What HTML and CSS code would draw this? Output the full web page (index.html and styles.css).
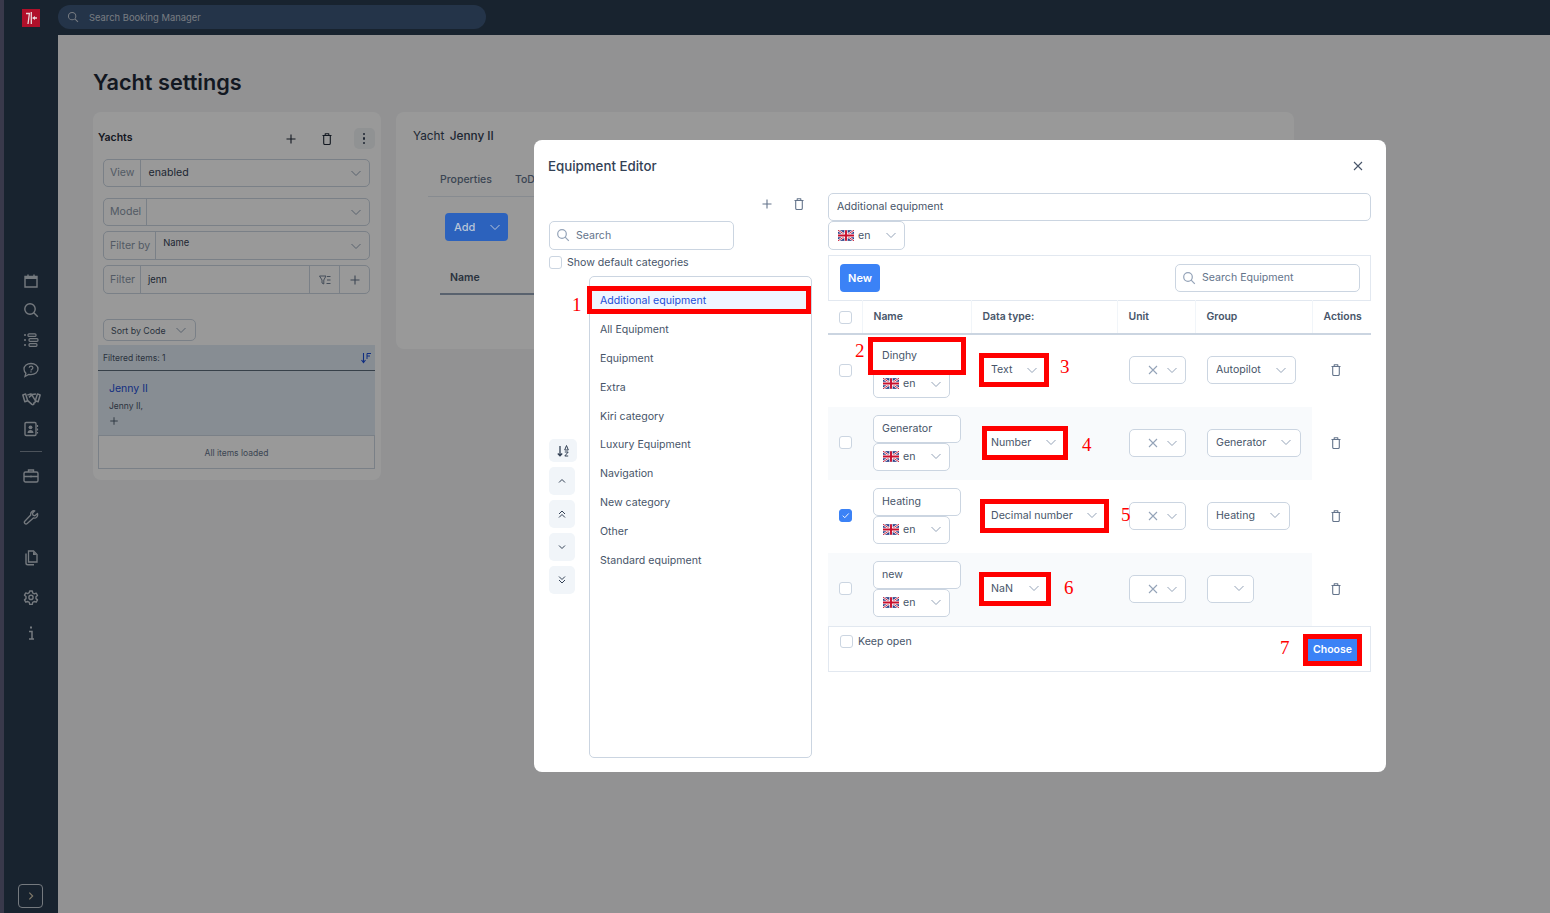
FILE: index.html
```html
<!DOCTYPE html>
<html lang="en">
<head>
  <meta charset="UTF-8" />
  <meta name="viewport" content="width=device-width, initial-scale=1.0"/>
  <title>Yacht settings - Equipment Editor</title>
  <link rel="stylesheet" href="styles.css">
</head>

<body>
  <!-- Icons used more than once -->
  <svg class="sprite" xmlns="http://www.w3.org/2000/svg">
    <symbol id="i-chev" viewBox="0 0 12 12"><path d="M1.5 4l4.5 4.5L10.5 4" fill="none" stroke="currentColor" stroke-width="1"/></symbol>
    <symbol id="i-x" viewBox="0 0 12 12"><path d="M2 2l8 8M10 2l-8 8" fill="none" stroke="currentColor" stroke-width="1.1"/></symbol>
    <symbol id="i-plus" viewBox="0 0 12 12"><path d="M6 1.5v9M1.5 6h9" fill="none" stroke="currentColor" stroke-width="1.1"/></symbol>
    <symbol id="i-trash" viewBox="0 0 12 12"><path d="M1.5 2.5h9M4.2 2.3V.8h3.600v1.500M2.700 2.500v7.700c0 .8.400 1.300 1.200 1.300h4.200c.8 0 1.200-.5 1.200-1.300V2.500" fill="none" stroke="currentColor" stroke-width="1.100" stroke-linejoin="round"/></symbol>
    <symbol id="i-search" viewBox="0 0 14 14"><circle cx="6" cy="6" r="4.3" fill="none" stroke="currentColor" stroke-width="1.2"/><path d="M9.2 9.2l3.6 3.6" fill="none" stroke="currentColor" stroke-width="1.2"/></symbol>
    <symbol id="i-flag" viewBox="0 0 15 10">
      <rect width="15" height="10" fill="#2b3f87"/>
      <path d="M0 0l15 10M15 0L0 10" stroke="#fff" stroke-width="2"/>
      <path d="M0 0l15 10M15 0L0 10" stroke="#c8102e" stroke-width=".8"/>
      <path d="M7.5 0v10M0 5h15" stroke="#fff" stroke-width="3.2"/>
      <path d="M7.5 0v10M0 5h15" stroke="#c8102e" stroke-width="1.8"/>
    </symbol>
  </svg>

  <div class="strip"></div>

  <!-- Sidebar -->
  <div class="sidebar">
    <div class="logo">
      <svg viewBox="0 0 18 18"><path d="M4 4.5h3.400L6 15M9.300 3v12" fill="none" stroke="#e8d8dc" stroke-width="1.300"/><path d="M10 9l3-2v1.200h2v1.600h-2V11z" fill="#e8d8dc"/></svg>
    </div>
    <div class="nav">
      <a class="nav-item"><svg viewBox="0 0 16 16"><path d="M2 3.500h12V14H2zM5 1.500v2M11 1.500v2" fill="none" stroke="currentColor" stroke-width="1.400"/><rect x="2" y="3" width="12" height="3" fill="currentColor"/></svg></a>
      <a class="nav-item"><svg viewBox="0 0 16 16"><circle cx="7" cy="7" r="5.200" fill="none" stroke="currentColor" stroke-width="1.400"/><path d="M10.800 10.800l4 4" stroke="currentColor" stroke-width="1.400"/></svg></a>
      <a class="nav-item"><svg viewBox="0 0 16 16"><path d="M1 3h2M1 8h2M1 13h2" stroke="currentColor" stroke-width="1.400"/><rect x="5" y="1.800" width="8" height="2.600" rx="1" fill="none" stroke="currentColor" stroke-width="1.200"/><rect x="6" y="6.700" width="9" height="2.600" rx="1" fill="none" stroke="currentColor" stroke-width="1.200"/><rect x="6" y="11.700" width="8" height="2.600" rx="1" fill="none" stroke="currentColor" stroke-width="1.200"/></svg></a>
      <a class="nav-item"><svg viewBox="0 0 16 16"><path d="M8 1.500c3.900 0 7 2.400 7 5.600s-3.100 5.600-7 5.600c-.8 0-1.600-.1-2.300-.3L2 14.500l.9-3.200C1.700 10.200 1 8.700 1 7.100 1 3.900 4.100 1.500 8 1.500z" fill="none" stroke="currentColor" stroke-width="1.300"/><path d="M6.200 5.800c0-2.200 3.700-2.200 3.700 0 0 1.400-1.900 1.300-1.900 2.600M8 9.300v1.100" fill="none" stroke="currentColor" stroke-width="1.200"/></svg></a>
      <a class="nav-item nav-hands"><svg viewBox="0 0 18 14"><path d="M.8 3.200l2.600-1 2 6.500-2.700.9zM17.200 3.200l-2.600-1-2 6.500 2.700.9zM5 3.300l3.200-1.100 1.600.6 3.400-.5M5.400 8.500l4 3.600c1.100.8 2.300-.2 1.700-1.200l1.300-.6.300-1.600M6.600 5.500l2.700-2.400 3.400 5.500" fill="none" stroke="currentColor" stroke-width="1.400" stroke-linejoin="round"/></svg></a>
      <a class="nav-item"><svg viewBox="0 0 16 16"><rect x="2" y="1.500" width="11" height="13" rx="1.200" fill="none" stroke="currentColor" stroke-width="1.400"/><circle cx="7.500" cy="6.300" r="1.900" fill="currentColor"/><path d="M4.500 12c0-4 6-4 6 0z" fill="currentColor"/><path d="M14.500 4v2M14.500 7.500v2M14.500 11v1.500" stroke="currentColor" stroke-width="1.200"/></svg></a>
      <div class="nav-line"></div>
      <a class="nav-item nav-work"><svg viewBox="0 0 16 16"><rect x="1" y="4" width="14" height="10" rx="1.500" fill="none" stroke="currentColor" stroke-width="1.400"/><path d="M5.500 4V2h5v2M1 8.500h14M8 7.500v2" fill="none" stroke="currentColor" stroke-width="1.400"/></svg></a>
      <a class="nav-item nav-wide"><svg viewBox="0 0 16 16"><path d="M14.500 3.500l-2.600 2.300-2-.6-.5-2 2.400-2.300C9.500.3 7.200 2.200 7.700 5L1.800 11.200c-1.400 1.600.8 3.800 2.400 2.400L10.400 8c2.700.7 4.800-1.700 4.100-4.500z" fill="none" stroke="currentColor" stroke-width="1.300" stroke-linejoin="round"/></svg></a>
      <a class="nav-item nav-wide"><svg viewBox="0 0 16 16"><path d="M5.500 1h5l3.500 3.500V12H5.500z" fill="none" stroke="currentColor" stroke-width="1.300"/><path d="M10 1.500l3.500 3.500H10z" fill="currentColor"/><path d="M3 3.500V13c0 1 .7 1.800 1.800 1.800h6.200" fill="none" stroke="currentColor" stroke-width="1.400"/></svg></a>
      <a class="nav-item nav-wide"><svg viewBox="0 0 16 16"><path d="M6.700 1h2.600l.4 2 1.600.9 1.900-.7 1.300 2.300-1.500 1.300v1.800l1.500 1.300-1.300 2.300-1.900-.7-1.600.9-.4 2H6.700l-.4-2-1.600-.9-1.900.7-1.300-2.300 1.500-1.300V6.500L1.500 5.200l1.300-2.300 1.900.7 1.600-.9z" fill="none" stroke="currentColor" stroke-width="1.400" stroke-linejoin="round"/><circle cx="8" cy="7.400" r="2.100" fill="none" stroke="currentColor" stroke-width="1.400"/></svg></a>
      <a class="nav-item nav-info"><svg viewBox="0 0 16 16"><path d="M6 6.500h3V14M6 14h5" fill="none" stroke="currentColor" stroke-width="1.500"/><rect x="7" y="1.500" width="2" height="2" fill="currentColor"/></svg></a>
    </div>
    <button class="expand"><svg viewBox="0 0 12 12"><path d="M4 2l4 4-4 4" fill="none" stroke="currentColor" stroke-width="1.400"/></svg></button>
  </div>

  <div class="main">
    <div class="topbar">
      <div class="global-search">
        <svg class="ico12"><use href="#i-search"/></svg>
        <span>Search Booking Manager</span>
      </div>
    </div>

    <div class="page">
      <h1>Yacht settings</h1>
      <div class="panels">

        <!-- Yachts list -->
        <div class="panel panel-yachts">
          <div class="panel-head">
            <b>Yachts</b>
            <svg class="ico12 head-plus"><use href="#i-plus"/></svg>
            <svg class="ico12 head-trash"><use href="#i-trash"/></svg>
            <span class="kebab"><i></i><i></i><i></i></span>
          </div>
          <div class="group group-view"><span class="addon">View</span><span class="group-value">enabled</span><svg class="ico12"><use href="#i-chev"/></svg></div>
          <div class="group group-model"><span class="addon">Model</span><span class="group-value"></span><svg class="ico12"><use href="#i-chev"/></svg></div>
          <div class="group group-by"><span class="addon">Filter by</span><span class="group-value small up">Name</span><svg class="ico12"><use href="#i-chev"/></svg></div>
          <div class="group group-filter">
            <span class="addon">Filter</span><span class="group-value small">jenn</span>
            <span class="cell"><svg class="ico12" viewBox="0 0 12 12"><path d="M.5 2h6.500L4.800 6v4L3 9V6zM8 2.500h3.500M8 6h3.500M7.500 9.500h4" fill="none" stroke="currentColor" stroke-width=".9"/></svg></span>
            <span class="cell"><svg class="ico12"><use href="#i-plus"/></svg></span>
          </div>
          <div class="sort">Sort by Code<svg class="ico12"><use href="#i-chev"/></svg></div>
          <div class="filtered">
            <span>Filtered items: 1</span>
            <svg class="ico12" viewBox="0 0 12 12"><path d="M3.500 1v9M1.500 8l2 2.500 2-2.500" fill="none" stroke="currentColor" stroke-width="1.100"/><path d="M7 1.500h4M7 4h3M7 1.500v5.500" fill="none" stroke="currentColor" stroke-width="1"/></svg>
          </div>
          <div class="yacht-item">
            <div class="yacht-name">Jenny II</div>
            <div class="yacht-sub">Jenny II,</div>
            <svg class="ico10" viewBox="0 0 12 12"><use href="#i-plus"/></svg>
          </div>
          <div class="loaded">All items loaded</div>
        </div>

        <!-- Yacht detail -->
        <div class="panel panel-detail">
          <div class="detail-title">Yacht <b>Jenny II</b></div>
          <div class="tabs"><span>Properties</span><span>ToDo</span></div>
          <button class="add-btn">Add<svg class="ico12"><use href="#i-chev"/></svg></button>
          <div class="detail-col">Name</div>
        </div>
      </div>
    </div>
  </div>

  <!-- Modal -->
  <div class="overlay">
    <div class="modal">
      <div class="modal-head">
        <h3>Equipment Editor</h3>
        <svg class="ico12 modal-close"><use href="#i-x"/></svg>
      </div>

      <div class="modal-body">
        <!-- Categories -->
        <div class="cats">
          <div class="cats-tools">
            <svg class="ico12"><use href="#i-plus"/></svg>
            <svg class="ico12"><use href="#i-trash"/></svg>
          </div>
          <div class="field field-search cats-search">
            <svg class="ico14"><use href="#i-search"/></svg><span>Search</span>
          </div>
          <label class="check-row"><span class="check"></span>Show default categories</label>
          <div class="cats-row">
            <div class="move">
              <button class="move-btn move-sort"><svg class="ico14" viewBox="0 0 14 14"><path d="M4 2v9.500M1.800 9.500L4 11.800l2.200-2.300" fill="none" stroke="currentColor" stroke-width="1.300"/><path d="M8.700 6l1.800-4.500L12.300 6zM8.800 8h3.400L8.800 12h3.400" fill="none" stroke="currentColor" stroke-width="1"/></svg></button>
              <button class="move-btn"><svg class="ico10" viewBox="0 0 10 10"><path d="M2 6.500l3-3 3 3" fill="none" stroke="currentColor" stroke-width="1"/></svg></button>
              <button class="move-btn"><svg class="ico10" viewBox="0 0 10 10"><path d="M2 5l3-3 3 3M2 8.500l3-3 3 3" fill="none" stroke="currentColor" stroke-width="1"/></svg></button>
              <button class="move-btn"><svg class="ico10" viewBox="0 0 10 10"><path d="M2 3.500l3 3 3-3" fill="none" stroke="currentColor" stroke-width="1"/></svg></button>
              <button class="move-btn"><svg class="ico10" viewBox="0 0 10 10"><path d="M2 1.500l3 3 3-3M2 5l3 3 3-3" fill="none" stroke="currentColor" stroke-width="1"/></svg></button>
            </div>
            <ul class="cat-list">
              <li class="active">Additional equipment</li>
              <li>All Equipment</li>
              <li>Equipment</li>
              <li>Extra</li>
              <li>Kiri category</li>
              <li>Luxury Equipment</li>
              <li>Navigation</li>
              <li>New category</li>
              <li>Other</li>
              <li>Standard equipment</li>
            </ul>
          </div>
        </div>

        <!-- Equipment -->
        <div class="equip">
          <div class="field">Additional equipment</div>
          <div class="select lang lang-top"><svg class="flag"><use href="#i-flag"/></svg>en<svg class="ico12 chev"><use href="#i-chev"/></svg></div>
          <div class="toolbar">
            <button class="btn-new">New</button>
            <div class="field field-search equip-search"><svg class="ico14"><use href="#i-search"/></svg><span>Search Equipment</span></div>
          </div>
          <table class="equip-table">
            <colgroup><col class="c-check"><col class="c-name"><col class="c-type"><col class="c-unit"><col class="c-group"><col class="c-act"></colgroup>
            <thead>
              <tr><th><span class="check"></span></th><th>Name</th><th>Data type:</th><th>Unit</th><th>Group</th><th>Actions</th></tr>
            </thead>
            <tbody>
              <tr>
                <td><span class="check"></span></td>
                <td>
                  <div class="field name-input marked">Dinghy</div>
                  <div class="select lang"><svg class="flag"><use href="#i-flag"/></svg>en<svg class="ico12 chev"><use href="#i-chev"/></svg></div>
                </td>
                <td><div class="select type-select marked type-text">Text<svg class="ico12 chev"><use href="#i-chev"/></svg></div></td>
                <td><div class="select unit-select"><svg class="ico12"><use href="#i-x"/></svg><svg class="ico12"><use href="#i-chev"/></svg></div></td>
                <td><div class="select group-select">Autopilot<svg class="ico12 chev"><use href="#i-chev"/></svg></div></td>
                <td class="act"><svg class="ico12"><use href="#i-trash"/></svg></td>
              </tr>
              <tr>
                <td><span class="check"></span></td>
                <td>
                  <div class="field name-input">Generator</div>
                  <div class="select lang"><svg class="flag"><use href="#i-flag"/></svg>en<svg class="ico12 chev"><use href="#i-chev"/></svg></div>
                </td>
                <td><div class="select type-select marked type-number">Number<svg class="ico12 chev"><use href="#i-chev"/></svg></div></td>
                <td><div class="select unit-select"><svg class="ico12"><use href="#i-x"/></svg><svg class="ico12"><use href="#i-chev"/></svg></div></td>
                <td><div class="select group-select">Generator<svg class="ico12 chev"><use href="#i-chev"/></svg></div></td>
                <td class="act"><svg class="ico12"><use href="#i-trash"/></svg></td>
              </tr>
              <tr>
                <td><span class="check checked"><svg viewBox="0 0 12 12"><path d="M3 6.200l2.200 2.200L9.500 3.800" fill="none" stroke="#fff" stroke-width="1"/></svg></span></td>
                <td>
                  <div class="field name-input">Heating</div>
                  <div class="select lang"><svg class="flag"><use href="#i-flag"/></svg>en<svg class="ico12 chev"><use href="#i-chev"/></svg></div>
                </td>
                <td><div class="select type-select marked type-decimal">Decimal number<svg class="ico12 chev"><use href="#i-chev"/></svg></div></td>
                <td><div class="select unit-select"><svg class="ico12"><use href="#i-x"/></svg><svg class="ico12"><use href="#i-chev"/></svg></div></td>
                <td><div class="select group-select">Heating<svg class="ico12 chev"><use href="#i-chev"/></svg></div></td>
                <td class="act"><svg class="ico12"><use href="#i-trash"/></svg></td>
              </tr>
              <tr>
                <td><span class="check"></span></td>
                <td>
                  <div class="field name-input">new</div>
                  <div class="select lang"><svg class="flag"><use href="#i-flag"/></svg>en<svg class="ico12 chev"><use href="#i-chev"/></svg></div>
                </td>
                <td><div class="select type-select marked type-nan">NaN<svg class="ico12 chev"><use href="#i-chev"/></svg></div></td>
                <td><div class="select unit-select"><svg class="ico12"><use href="#i-x"/></svg><svg class="ico12"><use href="#i-chev"/></svg></div></td>
                <td><div class="select group-select group-empty"><svg class="ico12 chev"><use href="#i-chev"/></svg></div></td>
                <td class="act"><svg class="ico12"><use href="#i-trash"/></svg></td>
              </tr>
            </tbody>
          </table>
          <div class="equip-foot">
            <label class="check-row"><span class="check"></span>Keep open</label>
            <button class="btn-choose marked">Choose</button>
          </div>
        </div>
      </div>

      <!-- Red numbers drawn over the screenshot -->
      <span class="note note-1">1</span>
      <span class="note note-2">2</span>
      <span class="note note-3">3</span>
      <span class="note note-4">4</span>
      <span class="note note-5">5</span>
      <span class="note note-6">6</span>
      <span class="note note-7">7</span>
    </div>
  </div>
</body>
</html>
```

FILE: styles.css
```css
* {
  box-sizing: border-box;
}

body {
  font-family: Inter, "Noto Sans", sans-serif;
  font-size: 10.6px;
  margin: 0;
  display: flex;
  height: 100vh;
  overflow: hidden;
  background-color: #f3f4f6;
  color: #475569;
}

button {
  font-family: inherit;
  border: none;
  padding: 0;
}

.sprite {
  display: none;
}

.ico10 {
  display: block;
  width: 10px;
  height: 10px;
}

.ico12 {
  width: 12px;
  height: 12px;
  flex: none;
}

.ico14 {
  width: 14px;
  height: 14px;
  flex: none;
}

.strip {
  width: 4px;
  background-color: #5f5f7e;
}

/* Sidebar */
.sidebar {
  width: 54px;
  background-color: #283b4f;
  color: #c4cbd4;
  display: flex;
  flex-direction: column;
  align-items: center;
  padding: 9px 0 5px;
}

/* logo keeps its full colour above the dim layer */
.logo {
  position: relative;
  z-index: 1;
  width: 18px;
  height: 18px;
  background-color: #b0102a;
}

.logo svg {
  display: block;
}

.nav {
  margin-top: 239px;
  display: flex;
  flex-direction: column;
  align-items: center;
}

.nav-item {
  height: 29.6px;
  display: flex;
  align-items: center;
  justify-content: center;
}

.nav-item svg {
  width: 16px;
  height: 16px;
}

.nav-hands svg {
  width: 19px;
}

.nav-line {
  width: 22px;
  height: 1px;
  background-color: #7f8b98;
  margin: 7px 0;
}

.nav-work {
  margin-top: 3px;
  margin-bottom: 7px;
}

.nav-wide {
  height: 40px;
}

.nav-info {
  height: 30px;
}

.expand {
  margin-top: auto;
  width: 25px;
  height: 24px;
  margin-left: -1px;
  background: none;
  border: 1px solid #c4cbd4;
  border-radius: 4px;
  color: #d8cbb0;
  display: flex;
  align-items: center;
  justify-content: center;
}

.expand svg {
  width: 10px;
  height: 10px;
}

/* Top bar */
.main {
  flex: 1;
  min-width: 0;
}

.topbar {
  height: 35px;
  background-color: #283b4f;
  padding-top: 5px;
}

.global-search {
  width: 428px;
  height: 24px;
  border-radius: 12px;
  background-color: #3d577a;
  color: #c6ced8;
  font-size: 9.4px;
  display: flex;
  align-items: center;
  gap: 10px;
  padding-left: 9px;
}

/* Page behind the modal */
.page {
  padding: 33px 0 0 35px;
}

h1 {
  margin: 0 0 16px;
  font-size: 21.7px;
  line-height: 28px;
  font-weight: 600;
  color: #1f2937;
}

.panels {
  display: flex;
  gap: 15px;
  align-items: flex-start;
}

.panel {
  background-color: #fff;
  border-radius: 8px;
}

.panel-yachts {
  width: 288px;
  height: 368px;
  padding: 16px 6px 0 5px;
}

.panel-detail {
  width: 898px;
  height: 237px;
  padding: 16px 17px;
}

.panel-head {
  height: 21px;
  display: flex;
  align-items: center;
  font-size: 10.5px;
  color: #1f2937;
}

.panel-head b {
  font-weight: 600;
  margin-top: -2px;
}

.head-plus {
  margin-left: 152px;
}

.head-trash {
  margin-left: 24px;
}

.kebab {
  margin-left: 21px;
  width: 21px;
  height: 21px;
  border-radius: 5px;
  background-color: #f1f3f5;
  display: flex;
  flex-direction: column;
  align-items: center;
  justify-content: center;
  gap: 2px;
}

.kebab i {
  width: 2.5px;
  height: 2.5px;
  border-radius: 50%;
  background-color: #334155;
}

.group {
  margin-left: 5px;
  width: 267px;
  height: 28px;
  border: 1px solid #cbd5e1;
  border-radius: 5px;
  display: flex;
  align-items: center;
  color: #94a3b8;
}

.group > svg {
  margin-right: 7px;
}

.group-view {
  margin-top: 10px;
}

.group-model {
  margin-top: 11px;
}

.group-by,
.group-filter {
  margin-top: 5px;
  height: 29px;
}

.addon {
  height: 100%;
  display: flex;
  align-items: center;
  padding: 0 5px 1px 6px;
  border-right: 1px solid #cbd5e1;
  color: #8a97a8;
}

.group-value {
  flex: 1;
  padding: 0 0 1px 8px;
  color: #334155;
}

.small {
  font-size: 9.4px;
  padding-left: 7px;
}

.up {
  margin-top: -5px;
}

.cell {
  width: 30px;
  height: 100%;
  border-left: 1px solid #cbd5e1;
  display: flex;
  align-items: center;
  justify-content: center;
  color: #64748b;
}

.sort {
  margin: 25px 0 0 5px;
  width: 93px;
  height: 22px;
  border: 1px solid #cbd5e1;
  border-radius: 5px;
  font-size: 8.8px;
  color: #475569;
  display: flex;
  align-items: center;
  justify-content: space-between;
  padding: 0 8px 0 7px;
}

.sort svg {
  color: #94a3b8;
}

.filtered {
  margin-top: 4px;
  height: 26px;
  background-color: #e2ecf5;
  border-bottom: 1px solid #5d6b7a;
  font-size: 8.5px;
  display: flex;
  align-items: center;
  justify-content: space-between;
  padding: 0 3px 0 5px;
}

.filtered svg {
  color: #1d4ed8;
}

.yacht-item {
  height: 65px;
  background-color: #e2ecf5;
  padding: 11px 11px 0;
  border-bottom: 1px solid #cbd5e1;
}

.yacht-name {
  color: #1d4ed8;
  font-size: 10.5px;
  line-height: 13px;
}

.yacht-sub {
  font-size: 8.5px;
  margin-top: 6px;
  line-height: 11px;
}

.yacht-item svg {
  margin-top: 4px;
}

.loaded {
  height: 33px;
  border: 1px solid #cbd5e1;
  border-top: none;
  font-size: 8.5px;
  color: #64748b;
  padding-top: 1px;
  display: flex;
  align-items: center;
  justify-content: center;
}

.detail-title {
  font-size: 11.8px;
  line-height: 16px;
  color: #334155;
}

.detail-title b {
  font-weight: 500;
  margin-left: 2px;
}

.tabs {
  margin: 26px 0 0 15px;
  height: 27px;
  display: flex;
  gap: 23px;
  font-size: 10.5px;
  font-weight: 500;
  color: #64748b;
  padding: 3px 0 0 12px;
  border-bottom: 1px solid #e2e8f0;
}

/* same as the logo, this blue is stronger than the dim layer allows */
.add-btn {
  position: relative;
  z-index: 1;
  margin: 16px 0 0 32px;
  width: 63px;
  height: 28px;
  background-color: #2c62bd;
  color: #b9c5d8;
  border-radius: 4px;
  font-size: 11px;
  font-weight: 500;
  display: flex;
  align-items: center;
  justify-content: space-between;
  padding: 0 7px 0 9px;
}

.detail-col {
  margin: 30px 0 0 27px;
  width: 95px;
  padding: 0 0 9px 10px;
  font-weight: 600;
  font-size: 10.5px;
  border-bottom: 2px solid #94a3b8;
}

/* Modal */
.overlay {
  position: fixed;
  inset: 0;
  background-color: rgba(0, 0, 0, 0.4);
  padding: 140px 0 0 534px;
}

.modal {
  position: relative;
  width: 852px;
  height: 632px;
  background-color: #fff;
  border-radius: 8px;
  padding: 0 15px;
}

.modal-head {
  height: 53px;
  display: flex;
  align-items: center;
  justify-content: space-between;
  padding: 0 7px 2px 0;
  margin-left: -1px;
}

.modal-head h3 {
  margin: 0;
  font-size: 13.3px;
  font-weight: 500;
  color: #334155;
}

.modal-close {
  color: #475569;
}

.modal-body {
  display: flex;
  gap: 16px;
}

.cats {
  width: 263px;
}

.cats-tools {
  height: 28px;
  display: flex;
  justify-content: flex-end;
  align-items: center;
  gap: 20px;
  padding: 0 7px 6px 0;
  color: #64748b;
}

.field {
  height: 28px;
  border: 1px solid #cbd5e1;
  border-radius: 5px;
  background-color: #fff;
  display: flex;
  align-items: center;
  padding: 0 0 1px 8px;
  color: #475569;
}

.field-search {
  gap: 6px;
  color: #64748b;
  padding-left: 6px;
}

.field-search svg {
  color: #94a3b8;
}

.cats-search {
  width: 185px;
  height: 29px;
}

.check-row {
  display: flex;
  align-items: center;
  gap: 5px;
  height: 26px;
  padding-bottom: 2px;
}

.check {
  display: inline-block;
  width: 13px;
  height: 13px;
  background-color: #fff;
  border: 1px solid #cbd5e1;
  border-radius: 3px;
  vertical-align: middle;
}

.equip-table td .check {
  display: block;
}

.checked {
  background-color: #3b82f6;
  border-color: #3b82f6;
}

.equip-table td .checked svg {
  display: block;
  width: 11px;
  height: 11px;
}

.cats-row {
  display: flex;
}

.move {
  width: 40px;
  padding-top: 163px;
  display: flex;
  flex-direction: column;
  gap: 5px;
}

.move-btn {
  width: 26px;
  height: 28px;
  background-color: #f1f5f9;
  border-radius: 5px;
  color: #334155;
  display: flex;
  align-items: center;
  justify-content: center;
}

.move-sort {
  width: 28px;
  height: 23px;
}

.cat-list {
  list-style: none;
  margin: 0;
  width: 223px;
  height: 482px;
  padding: 14px 5px 0 2px;
  border: 1px solid #cbd5e1;
  border-radius: 5px;
}

.cat-list li {
  height: 18px;
  line-height: 20px;
  margin-bottom: 10.9px;
  padding-left: 8px;
}

.cat-list .active {
  background-color: #eff6ff;
  color: #1d4ed8;
  outline: 5px solid #f00;
}

.equip {
  width: 543px;
}

.select {
  height: 28px;
  border: 1px solid #cbd5e1;
  border-radius: 5px;
  background-color: #fff;
  display: flex;
  align-items: center;
  width: fit-content;
  padding: 0 9px 1px;
  color: #475569;
}

.chev {
  color: #94a3b8;
}

.lang {
  width: 77px;
  color: #475569;
  padding-right: 7px;
}

.lang .flag {
  width: 16px;
  height: 11px;
  margin-right: 4px;
  flex: none;
}

.lang .chev {
  margin-left: auto;
}

.lang-top {
  height: 29px;
}

.toolbar {
  margin-top: 5px;
  height: 45px;
  border: 1px solid #e2e8f0;
  border-bottom: none;
  display: flex;
  align-items: center;
  justify-content: space-between;
  padding: 0 10px 0 11px;
}

.btn-new {
  width: 40px;
  height: 28px;
  background-color: #3b82f6;
  color: #fff;
  border-radius: 4px;
  font-size: 11px;
  font-weight: 600;
}

.equip-search {
  width: 185px;
}

.equip-table {
  width: 543px;
  table-layout: fixed;
  border-collapse: collapse;
}

.c-check {
  width: 34px;
}

.c-name {
  width: 109px;
}

.c-type {
  width: 146px;
}

.c-unit {
  width: 78px;
}

.c-group {
  width: 117px;
}

.c-act {
  width: 59px;
}

.equip-table th {
  height: 33px;
  text-align: left;
  font-weight: 600;
  font-size: 10.4px;
  color: #475569;
  padding: 0 0 0 11px;
  border-top: 1px solid #e2e8f0;
  border-bottom: 2px solid #cbd5e1;
  border-right: 1px solid #f1f5f9;
}

.equip-table th:last-child {
  border-right: none;
}

.equip-table td {
  height: 73px;
  padding: 0 0 1px 11px;
}

.equip-table td:nth-child(4),
.equip-table td:nth-child(5) {
  padding-left: 12px;
}

.equip-table tbody tr:nth-child(even) td {
  background-color: #f8fafc;
}

.equip-table tbody tr:nth-child(even) td.act {
  background-color: #fff;
}

.act {
  color: #64748b;
}

.act svg {
  display: block;
  margin-left: 7px;
}

.name-input {
  width: 88px;
}

.type-select {
  justify-content: space-between;
  height: 24px;
  border: none;
  border-radius: 0;
  padding: 0 6px 1px 7px;
}

.marked {
  outline: 5px solid #f00;
  border-color: transparent;
  border-radius: 0;
}

.type-text {
  width: 60px;
  margin-left: 2px;
}

.type-number {
  width: 76px;
  margin-left: 5px;
  padding-left: 4px;
}

.type-decimal {
  width: 119px;
  margin-left: 3px;
  padding-left: 6px;
}

.type-nan {
  width: 62px;
  margin-left: 2px;
}

.unit-select {
  width: 57px;
  padding: 0 7px 0 17px;
  justify-content: space-between;
  color: #94a3b8;
}

.group-select {
  gap: 14px;
  padding: 0 8px 1px;
}

.group-empty {
  width: 47px;
  justify-content: flex-end;
}

.equip-foot {
  height: 46px;
  border: 1px solid #e2e8f0;
  display: flex;
  justify-content: space-between;
  align-items: flex-start;
  padding: 3px 13px 0 11px;
}

.btn-choose {
  margin-top: 9px;
  width: 49px;
  height: 22px;
  background-color: #3b82f6;
  color: #fff;
  font-size: 10.5px;
  font-weight: 600;
}

/* Annotations */
.note {
  position: absolute;
  font-family: "Liberation Serif", serif;
  font-size: 19px;
  line-height: 20px;
  color: #f00;
}

.note-1 {
  left: 38px;
  top: 155px;
}

.note-2 {
  left: 321px;
  top: 201px;
}

.note-3 {
  left: 526px;
  top: 217px;
}

.note-4 {
  left: 548px;
  top: 295px;
}

.note-5 {
  left: 587px;
  top: 365px;
}

.note-6 {
  left: 530px;
  top: 438px;
}

.note-7 {
  left: 746px;
  top: 498px;
}
```
